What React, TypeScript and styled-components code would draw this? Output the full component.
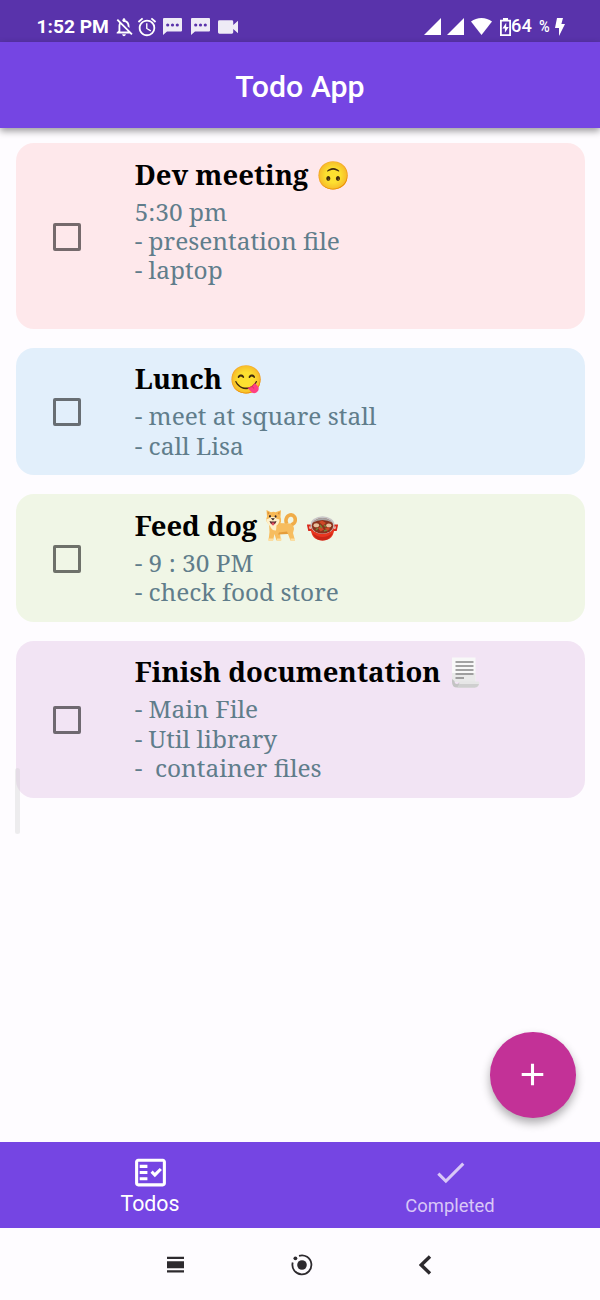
import React, { type ReactNode } from "react";
import styled, { createGlobalStyle } from "styled-components";
import {
  MdAdd,
  MdAlarm,
  MdCheck,
  MdOutlineFactCheck,
  MdOutlineNotificationsOff,
} from "react-icons/md";

const GlobalStyle = createGlobalStyle`
  * { box-sizing: border-box; }
  body { margin: 0; background: #fefcff; }
  svg { display: block; flex: none; }
`;

const Screen = styled.div`
  position: relative;
  display: flex;
  flex-direction: column;
  width: 600px;
  height: 1300px;
  overflow: hidden;
  background: #fefcff;
  font-family: Roboto, sans-serif;
`;

const StatusBar = styled.header`
  display: flex;
  justify-content: space-between;
  height: 42px;
  padding: 10.5px 35px 0 36.5px;
  background: #5933ab;
  color: #fff;
`;

const StatusGroup = styled.div`
  display: flex;
  align-items: center;
  height: 32px;
`;

const Clock = styled.span`
  width: 76.5px;
  font-size: 19.2px;
  font-weight: 700;
  line-height: 22px;
  white-space: nowrap;
`;

const StatusIcon = styled.span<{ $gap?: number; $dim?: boolean }>`
  margin-left: ${(p) => p.$gap ?? 0}px;
  opacity: ${(p) => (p.$dim ? 0.9 : 1)};
`;

const BatteryText = styled.span`
  display: flex;
  align-items: baseline;
  gap: 7px;
  width: 44px;
  font-size: 18.3px;
  font-weight: 500;
  line-height: 22px;
`;

const Percent = styled.span`
  font-size: 16.5px;
  transform: scaleX(0.88);
  transform-origin: left;
`;

const AppBar = styled.div`
  display: flex;
  align-items: center;
  justify-content: center;
  height: 85.5px;
  flex: none;
  z-index: 1;
  background: #7545e3;
  box-shadow: 0 3px 7px rgba(0, 0, 0, 0.4);
`;

const AppTitle = styled.h1`
  margin: 3px 0 0;
  color: #fff;
  font-size: 30.3px;
  font-weight: 500;
  line-height: 35px;
`;

const TodoList = styled.main`
  display: flex;
  flex: 1;
  flex-direction: column;
  gap: 18.6px;
  padding: 15.5px 15px 0 15.5px;
`;

const Card = styled.article<{ $bg: string }>`
  display: flex;
  align-items: center;
  padding-left: 37.6px;
  border-radius: 18px;
  background: ${(p) => p.$bg};
`;

const CheckCell = styled.div`
  width: 81.6px;
  padding-top: 1px;
`;

const Checkbox = styled.div`
  width: 28px;
  height: 28px;
  border: 3px solid rgba(0, 0, 0, 0.54);
  border-radius: 2px;
`;

const CardText = styled.div<{ $bottom: number }>`
  flex: 1;
  padding: 12.6px 0 ${(p) => p.$bottom}px;
  font-family: "Noto Serif", serif;
`;

const CardTitle = styled.h2`
  display: flex;
  align-items: center;
  margin: 0 0 4px;
  height: 37px;
  color: #000;
  font-size: 27.5px;
  font-weight: 700;
  white-space: pre;
`;

const CardBody = styled.p`
  margin: 0;
  color: #607d8b;
  font-size: 24.45px;
  line-height: 29.3px;
  white-space: pre;
`;

const EdgeHandle = styled.div`
  position: absolute;
  left: 15px;
  top: 768px;
  width: 5px;
  height: 66px;
  border-radius: 3px;
  background: rgba(205, 205, 205, 0.35);
`;

const AddButton = styled.button`
  position: absolute;
  left: 490px;
  top: 1032px;
  display: flex;
  align-items: center;
  justify-content: center;
  width: 85.5px;
  height: 85.5px;
  padding: 0;
  border: 0;
  border-radius: 50%;
  background: #c33197;
  color: #fff;
  box-shadow: 0 5px 10px rgba(0, 0, 0, 0.32);
`;

const BottomBar = styled.nav`
  display: grid;
  grid-template-columns: 1fr 1fr;
  height: 86px;
  flex: none;
  background: #7545e3;
`;

const Tab = styled.div<{ $active?: boolean }>`
  display: flex;
  flex-direction: column;
  align-items: center;
  padding-top: 12px;
  color: ${(p) => (p.$active ? "#fff" : "#d9c7f7")};
  font-size: ${(p) => (p.$active ? 21.3 : 18.4)}px;
  line-height: ${(p) => (p.$active ? 25 : 29)}px;
`;

const SystemBar = styled.footer`
  display: flex;
  justify-content: space-between;
  align-items: center;
  height: 72px;
  flex: none;
  padding: 1px 168px 0 167px;
  color: #2d2a2e;
`;

const Signal = () => (
  <svg width="17" height="17" viewBox="0 0 17 17" fill="currentColor">
    <path d="M17 0v17H0z" />
  </svg>
);

const Wifi = () => (
  <svg width="21" height="17" viewBox="0 0 21 17" fill="currentColor">
    <path d="M0 3.6C3 1.2 6.6 0 10.5 0S18 1.2 21 3.6L10.5 17z" />
  </svg>
);

const Battery = () => (
  <svg width="11" height="18" viewBox="0 0 11 18">
    <path d="M3 0h5v2H3z" fill="currentColor" />
    <path d="M.9 2.7h9.2v14.4H.9z" fill="none" stroke="currentColor" strokeWidth="1.8" />
    <path d="M6.2 4.8 2.4 10.4h2.5v4.4l3.9-5.7H6.2z" fill="currentColor" />
  </svg>
);

const Bolt = () => (
  <svg width="10" height="18" viewBox="0 0 10 18" fill="currentColor">
    <path d="M2 0h6L6.4 6H10L4 18V10H0z" />
  </svg>
);

const Message = () => (
  <svg width="19" height="17" viewBox="0 0 19 17">
    <path d="M1 0h17q1 0 1 1v11.5q0 1-1 1H4L0 17V1q0-1 1-1z" fill="currentColor" />
    <g fill="#5933ab">
      <circle cx="4.7" cy="7" r="1.6" />
      <circle cx="9.5" cy="7" r="1.6" />
      <circle cx="14.3" cy="7" r="1.6" />
    </g>
  </svg>
);

const Video = () => (
  <svg width="20" height="14" viewBox="0 0 21 14" fill="currentColor">
    <path d="M1.500 0h13q1.500 0 1.500 1.500V5l5-4.500v13L16 9v3.500q0 1.500-1.500 1.500h-13Q0 14 0 12.500v-11Q0 0 1.500 0z" />
  </svg>
);

const Recents = () => (
  <svg width="17" height="18" viewBox="0 0 17 18" fill="currentColor">
    <path d="M0 .7h17v2.4H0zM0 5.200h17v7H0zM0 14.200h17v2.400H0z" />
  </svg>
);

const Home = () => (
  <svg width="22" height="22" viewBox="0 0 22 22" fill="currentColor">
    <circle cx="11" cy="11" r="4.8" />
    <circle cx="4.4" cy="4.3" r="1.9" />
    <path d="M8 1.800A9.500 9.500 0 1 1 1.700 8.500" fill="none" stroke="currentColor" strokeWidth="1.8" />
  </svg>
);

const Back = () => (
  <svg width="13" height="20" viewBox="0 0 13 20">
    <path d="M11 1.500 2.200 10l8.800 8.500" fill="none" stroke="currentColor" strokeWidth="3.4" />
  </svg>
);

const Dog = () => (
  <svg width="32" height="32" viewBox="0 0 32 32">
    <path
      d="M22 15c-2-3-1-8 3-9 4-.8 6 3 5 6.500-.8 2.500-2.500 3-4 3.500"
      fill="none"
      stroke="#f0ac48"
      strokeWidth="3.600"
    />
    <path d="M4 14h9l12 .5q4 1.500 4 5.500l-1 4 2 7.500h-4.500L23 25l-8-.5L16 31.500h-4.500L9.500 25 8 31.500H3.500L4.500 23z" fill="#f7bd5f" />
    <path d="M13 25.500 23 25l-1-2.500-8 1z" fill="#e59d3b" />
    <path d="M1.500 1 6 3.200q2.500-.7 4.500 0L16 1.200l-.5 6.800q2 5-2 8-4.500 3-9.500-.5Q0 12 2 7.500z" fill="#f7b956" />
    <path d="M2.500 2.500 4.500 4 2.800 6zM14.800 2.700 12.500 4l1.700 2z" fill="#dc8e35" />
    <path d="M1.300 10.500q2.800-1 4.200-2.500h4q2 2 5 2.500 0 4-3 6l-.5 5q-4 .5-6-4.500-3.500-3-3.700-6.500z" fill="#fff0c9" />
    <ellipse cx="5" cy="7.200" rx=".9" ry="1.200" fill="#302326" />
    <ellipse cx="10.600" cy="7.400" rx=".9" ry="1.200" fill="#302326" />
    <path d="M5.800 9.200h4L8 11.400z" fill="#302326" />
    <path d="M4.500 12q3.500 1 7 0-1 3.500-3.500 3.500T4.500 12z" fill="#50262b" />
    <path d="M6.500 13.500h3q0 3-1.500 3t-1.500-3z" fill="#e14f60" />
    <path d="M3.200 29.500h5v2h-5zM12 29.500h4.500v2H12zM25.500 29.500h4.500v2h-4.500z" fill="#ffe0a0" />
  </svg>
);

const Pot = () => (
  <svg width="31" height="25" viewBox="0 0 31 25">
    <path d="M4.500 9.500H1l1 4.500h3.500M26.500 9.500H30L29 14h-3.500" fill="none" stroke="#d9291c" strokeWidth="1.800" />
    <path d="M3.500 10q0 14.500 12 14.500T27.500 10z" fill="#e8351f" />
    <path d="M5.500 17q3 7.500 10 7.500T25.500 17q-4.500 4-10 4t-10-4z" fill="#ca2617" />
    <ellipse cx="15.500" cy="9" rx="12" ry="8.700" fill="#c9c7c8" />
    <ellipse cx="15.500" cy="9.800" rx="10.800" ry="7.600" fill="#8a321d" />
    <path d="M6 6.500q3.500-4.500 9.500-4.500T25 6.500q-4-2.500-9.500-2.500T6 6.500z" fill="#a9a6a6" />
    <ellipse cx="9.300" cy="9.200" rx="2.800" ry="2" fill="#e8c09d" />
    <ellipse cx="21.800" cy="9.600" rx="2.700" ry="2" fill="#e8c09d" />
    <path d="m12 6 3-1.500 4 2.500-3 2.500zm-1 6 3-2 3 3.500-3.500 2zm7 .5 3-1.500 2 2-3 2z" fill="#cf4826" />
    <path d="m13 9 2 3m2-3 2 2m-2 4 3-1M11 12l-2 2" stroke="#748438" strokeWidth="1.500" />
  </svg>
);

const Paper = () => (
  <svg width="29" height="31" viewBox="0 0 29 31">
    <path d="M1 .5h23.500V25H1z" fill="#f8f8f8" />
    <path d="M1 16h23.500v9H1z" fill="#e9e9e9" />
    <path d="M1 22v3q0 5.500 5 5.500h18V25H8q0 2-2 2-2.500 0-2.500-3z" fill="#c4c4c4" />
    <path d="M8 24.500h19.500q1 0 .8 1.500-.6 4.500-4.300 4.500H6q3-1.500 2-6z" fill="#e6e6e6" />
    <path d="M6 30.500h18q3-.3 4-3.500H8.300Q8 29.500 6 30.500z" fill="#cfcfcf" />
    <path d="M4.500 5h18M4.500 9h18M4.500 13h18M4.500 17h18M4.500 21H13" stroke="#858585" strokeWidth="1.300" />
  </svg>
);

const EmojiSlot = styled.span<{ $gap: number; $drop: number }>`
  margin-left: ${(p) => p.$gap}px;
  padding-top: ${(p) => p.$drop}px;
`;

interface Todo {
  bg: string;
  title: string;
  art?: ReactNode;
  bottom: number;
  body: string;
}

const todos: Todo[] = [
  {
    bg: "#fee8eb",
    title: "Dev meeting 🙃",
    bottom: 44.6,
    body: "5:30 pm\n- presentation file\n- laptop",
  },
  {
    bg: "#e2effb",
    title: "Lunch 😋",
    bottom: 15.6,
    body: "- meet at square stall\n- call Lisa",
  },
  {
    bg: "#f0f6e6",
    title: "Feed dog",
    art: (
      <>
        <EmojiSlot $gap={8} $drop={0}><Dog /></EmojiSlot>
        <EmojiSlot $gap={10} $drop={6}><Pot /></EmojiSlot>
      </>
    ),
    bottom: 15.8,
    body: "- 9 : 30 PM\n- check food store",
  },
  {
    bg: "#f2e4f4",
    title: "Finish documentation",
    art: <EmojiSlot $gap={10} $drop={1}><Paper /></EmojiSlot>,
    bottom: 15.6,
    body: "- Main File\n- Util library\n-  container files",
  },
];

export default function App() {
  return (
    <Screen>
      <GlobalStyle />
      <StatusBar>
        <StatusGroup>
          <Clock>1:52 PM</Clock>
          <StatusIcon><MdOutlineNotificationsOff size={22} /></StatusIcon>
          <StatusIcon $gap={1}><MdAlarm size={22} /></StatusIcon>
          <StatusIcon $gap={5} $dim><Message /></StatusIcon>
          <StatusIcon $gap={9} $dim><Message /></StatusIcon>
          <StatusIcon $gap={8} $dim><Video /></StatusIcon>
        </StatusGroup>
        <StatusGroup>
          <Signal />
          <StatusIcon $gap={6}><Signal /></StatusIcon>
          <StatusIcon $gap={7.5}><Wifi /></StatusIcon>
          <StatusIcon $gap={8}><Battery /></StatusIcon>
          <BatteryText>
            64
            <Percent>%</Percent>
          </BatteryText>
          <Bolt />
        </StatusGroup>
      </StatusBar>
      <AppBar>
        <AppTitle>Todo App</AppTitle>
      </AppBar>
      <TodoList>
        {todos.map((todo) => (
          <Card key={todo.title} $bg={todo.bg}>
            <CheckCell>
              <Checkbox />
            </CheckCell>
            <CardText $bottom={todo.bottom}>
              <CardTitle>
                {todo.title}
                {todo.art}
              </CardTitle>
              <CardBody>{todo.body}</CardBody>
            </CardText>
          </Card>
        ))}
      </TodoList>
      <BottomBar>
        <Tab $active>
          <MdOutlineFactCheck size={37} />
          Todos
        </Tab>
        <Tab>
          <MdCheck size={37} />
          Completed
        </Tab>
      </BottomBar>
      <SystemBar>
        <Recents />
        <Home />
        <Back />
      </SystemBar>
      <EdgeHandle />
      <AddButton aria-label="Add todo">
        <MdAdd size={37} />
      </AddButton>
    </Screen>
  );
}
